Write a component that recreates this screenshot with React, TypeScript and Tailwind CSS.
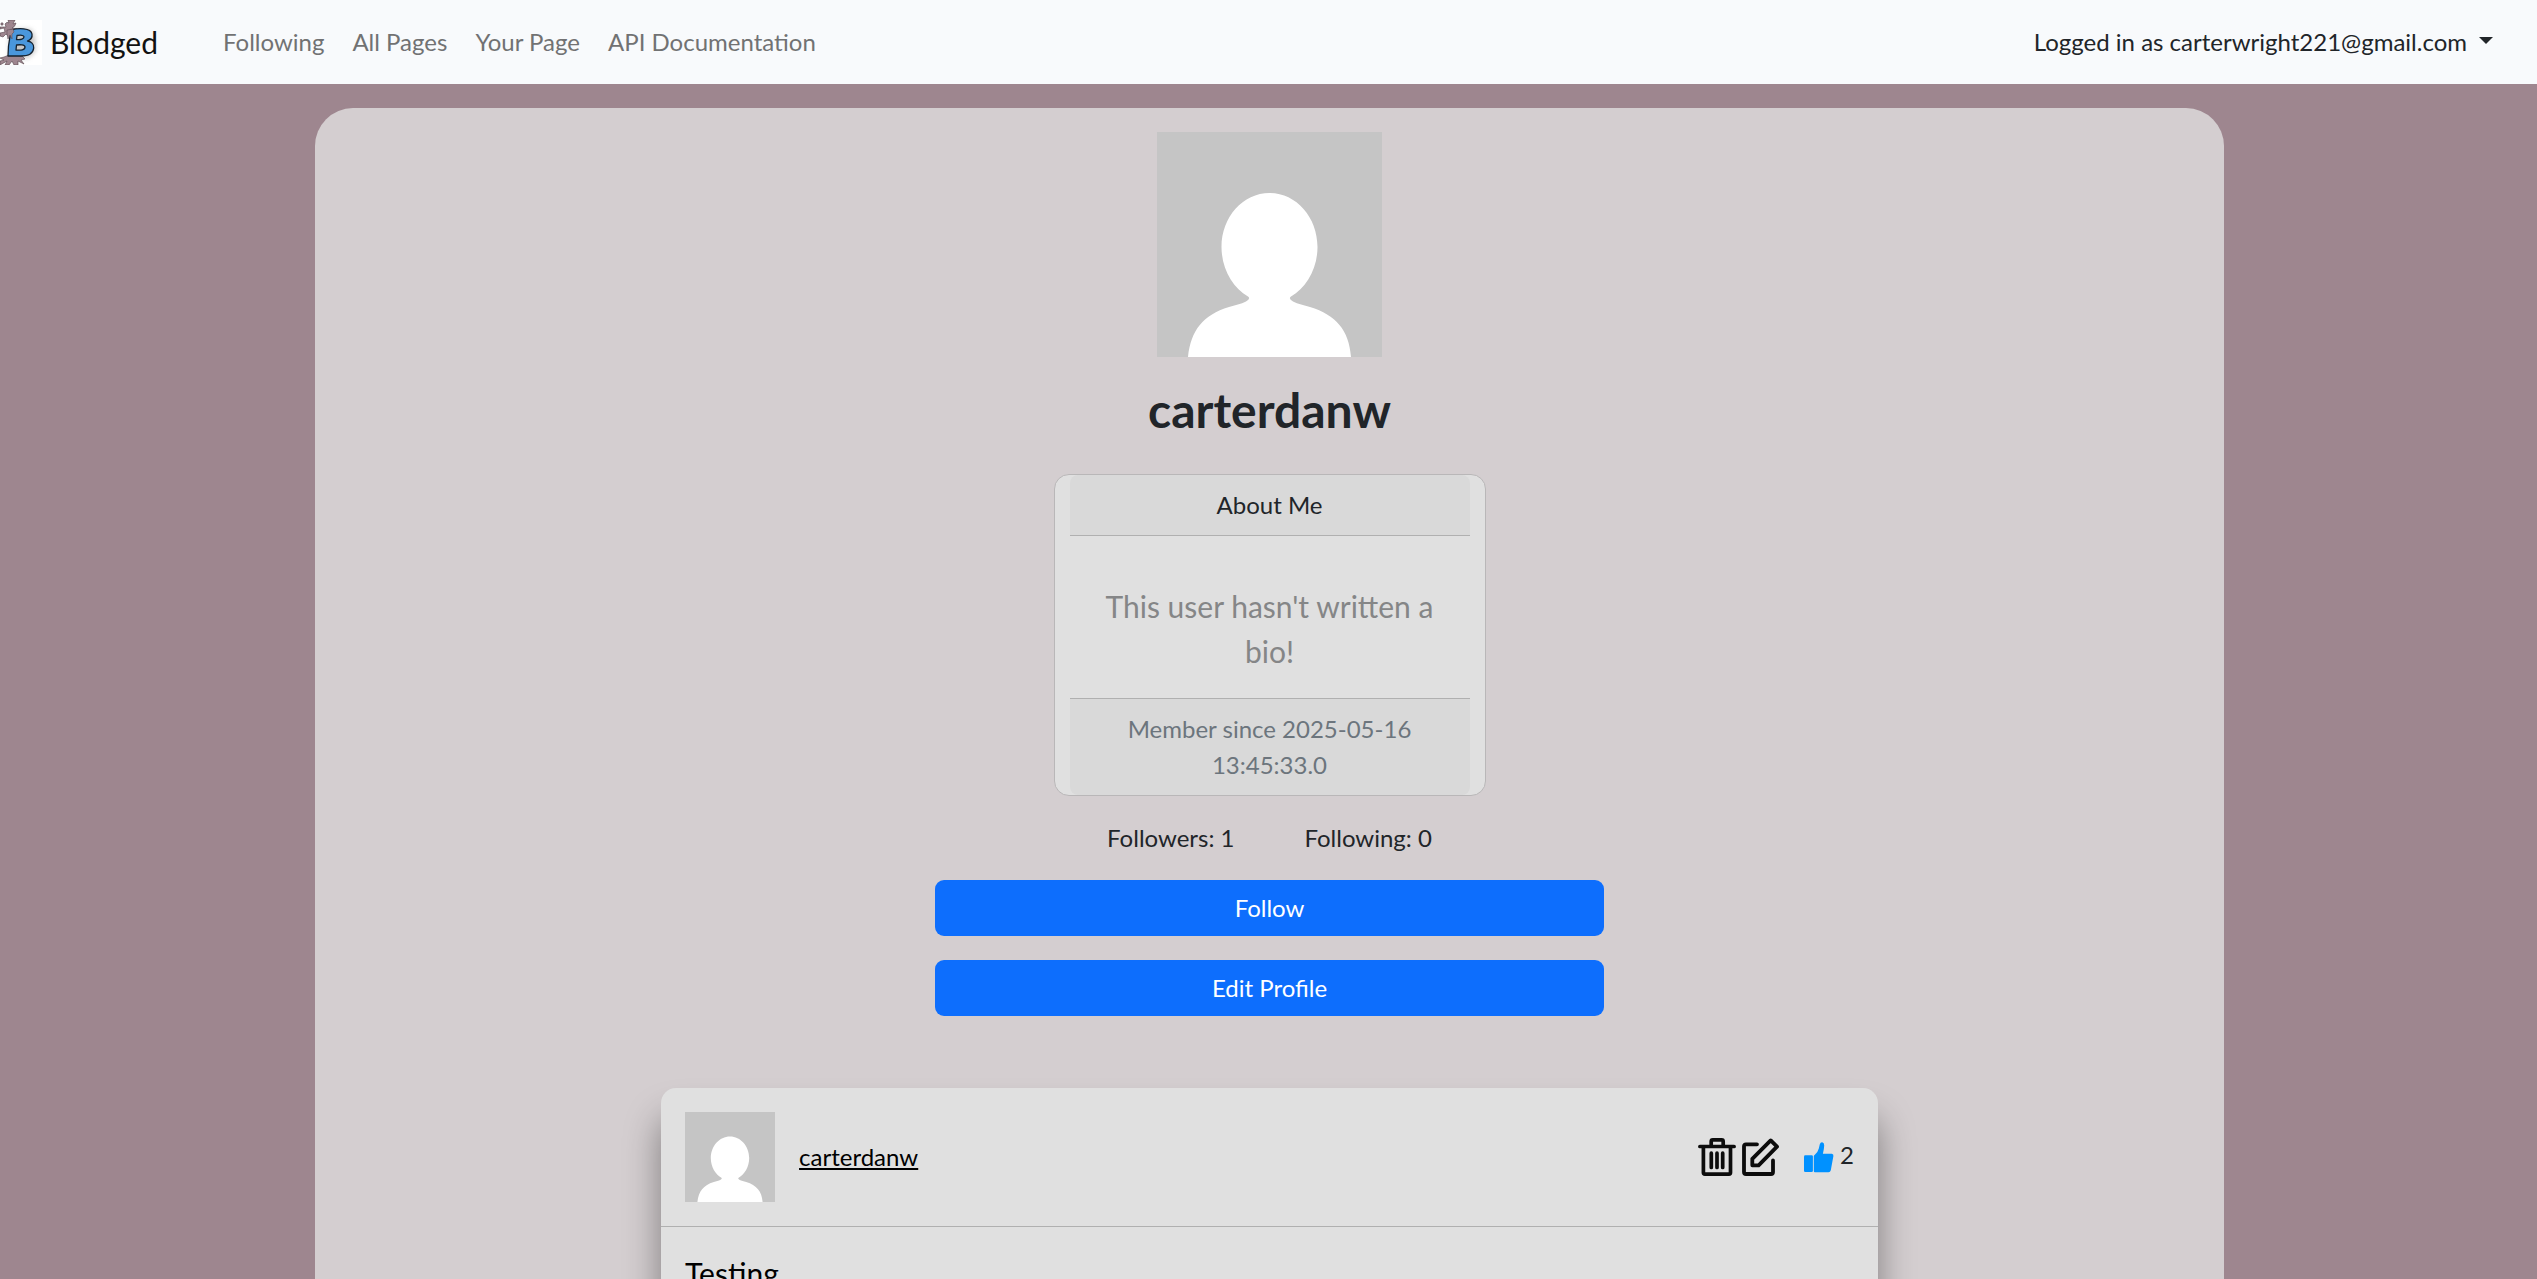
import type { ReactNode } from "react";

function Avatar({ className }: { className: string }) {
  return (
    <svg viewBox="0 0 225 225" className={className} role="img" aria-label="carterdanw's profile picture">
      <rect width="225" height="225" fill="#c5c5c5" />
      <path
        fill="#fff"
        d="M112.500 61C139 61 160.500 85 160.500 115C160.500 137 149 156 134 164.500Q131 166.500 136 169.500C141 172 147 173 153 175C179 183 192 198 194 225H31C34 198 46 183 72 175C78 173 84 172 89 169.500Q94 166.500 91 164.500C76 156 64.500 137 64.500 115C64.500 85 86 61 112.500 61Z"
      />
    </svg>
  );
}

function Logo() {
  return (
    <svg viewBox="0 0 42 45" className="h-[45px] w-[42px] shrink-0" aria-hidden="true">
      <defs>
        <filter id="logo-shadow" x="-30%" y="-30%" width="160%" height="160%">
          <feGaussianBlur stdDeviation="2.500" />
        </filter>
      </defs>
      <rect width="42" height="45" fill="#fff" />
      <path d="M10 9H30Q37 14 35 32L28 38H9Z" fill="#9a9a9a" opacity=".55" filter="url(#logo-shadow)" />
      <g fill="#9e868f" stroke="#55454c" strokeWidth=".6">
        <path d="M5 4Q7 1 9 3L8 0H15L13 4L16 3Q15 7 12 8L17 9L10 12L9 17L6 14L3 17L0 16V13L5 12L4 8L0 9V7L6 7Z" />
        <path d="M4 37L9 35L22 36L25 39L21 40L24 44L18 41V45H14L12 41L9 45H5L7 41L0 45V41L4 40L0 38Z" />
        <circle cx="2" cy="4" r="1.200" />
      </g>
      <path
        fillRule="evenodd"
        fill="#4a97dc"
        stroke="#16222e"
        strokeWidth="1.300"
        strokeLinejoin="round"
        d="M11 10C18 8 31 7.500 32 14C32.600 18 30 20 27.500 21C31 21.500 34 24 33.700 28C33 35 27 36 21 36H8L8.500 26Z M17 15.500L16.500 19.500C21 20 24 19 24 16.800C24 15 20.500 15 17 15.500Z M16.500 25L16 30C21 30.500 25 30 25 27C25 24.500 20 24.500 16.500 25Z"
      />
      <path d="M7 10L13 9L14 12L12 14V19L10 15L8 19L7 14Z" fill="#9e868f" stroke="#55454c" strokeWidth=".5" />
    </svg>
  );
}

function TrashIcon() {
  return (
    <svg viewBox="0 0 38 38" className="size-[38px]" fill="none" stroke="#0c0c0c" strokeWidth="3.700" strokeLinejoin="round" strokeLinecap="round" aria-hidden="true">
      <path d="M1.900 8.500H36.100M13.200 8V3.500Q13.200 1.900 14.800 1.900H23.600Q25.200 1.900 25.200 3.500V8M5.400 9V34.600Q5.400 36.100 6.900 36.100H31Q32.500 36.100 32.500 34.600V9" />
      <path d="M13.300 15.200V29.500M19 15.200V29.500M24.700 15.200V29.500" />
    </svg>
  );
}

function EditIcon() {
  return (
    <svg viewBox="0 0 38 38" className="size-[38px]" fill="none" stroke="#0c0c0c" strokeWidth="3.800" strokeLinejoin="round" strokeLinecap="round" aria-hidden="true">
      <path d="M15 6.300H4Q2 6.300 2 8.300V34Q2 36 4 36H29Q31 36 31 34V22.500" />
      <path d="M10.300 27.300V20.800L28.700 2.400L35 8.700L16.600 27.300Z" />
    </svg>
  );
}

function LikeIcon() {
  return (
    <svg viewBox="0 0 30 31" className="h-[31px] w-[30px]" fill="#0091ff" aria-hidden="true">
      <rect x="0" y="13.300" width="8.900" height="16.700" rx="1.300" />
      <path d="M9.800 14.500Q9.800 13.600 10.600 13.100Q13.500 11.200 14.800 6.500L15.800 2.300Q16.500 0 18.200 .2Q20.300 .6 20.200 3.500Q20.100 7 18.900 11.800H27.800Q29.700 12 29.400 14L26.800 28.300Q26.300 30.300 24.500 30.300H11Q9.800 30.300 9.800 29Z" />
    </svg>
  );
}

function NavLink({ children }: { children: ReactNode }) {
  return (
    <li>
      <a href="#" className="text-[#717273]">{children}</a>
    </li>
  );
}

const pages = ["Following", "All Pages", "Your Page", "API Documentation"];

export default function App() {
  return (
    <div className="flex min-h-screen flex-col bg-[#9e868f] font-['Lato',sans-serif] text-2xl leading-9 text-[#212529]">
      <nav className="flex h-[84px] shrink-0 items-center bg-[#f8fafc] pr-11">
        <a href="#" className="flex w-[199px] items-center gap-2 text-[30px] leading-[45px] text-[#121212]">
          <Logo />
          Blodged
        </a>
        <ul className="ml-6 flex gap-7 whitespace-nowrap">
          {pages.map((page) => (
            <NavLink key={page}>{page}</NavLink>
          ))}
        </ul>
        <button type="button" className="ml-auto flex items-center gap-3 whitespace-nowrap">
          Logged in as carterwright221@gmail.com
          <svg viewBox="0 0 14 7" className="mb-1 h-[7px] w-3.5" aria-hidden="true">
            <path d="M0 0H14L7 7Z" fill="#212529" />
          </svg>
        </button>
      </nav>

      <div className="flex grow flex-col pl-0.5">
        <main className="mx-auto mt-6 flex w-[75.3%] grow flex-col items-center rounded-t-[38px] bg-[#d4ced0] pt-6">
          <Avatar className="size-[225px]" />
          <h1 className="mt-6 text-5xl leading-[57px] font-bold">carterdanw</h1>

          <section className="mt-9 w-[432px] rounded-[15px] border border-[#b9b7b8] bg-[#e0e0e0] px-[15px] text-center">
            <h2 className="rounded-t-lg border-b border-[#b0b0b0] bg-[#d9d9d9] px-6 py-3">About Me</h2>
            <p className="px-6 pt-12 pb-6 text-[30px] leading-[45px] text-[#858687]">This user hasn't written a bio!</p>
            <p className="rounded-b-lg border-t border-[#b0b0b0] bg-[#d9d9d9] px-6 py-3 text-[#6c757d]">
              Member since 2025-05-16 13:45:33.0
            </p>
          </section>

          <div className="mt-6 flex gap-[70px]">
            <a href="#">Followers: 1</a>
            <a href="#">Following: 0</a>
          </div>

          <div className="mt-6 flex w-[35%] flex-col gap-6 text-white">
            <button type="button" className="rounded-[9px] bg-[#0d6efd] py-2.5">Follow</button>
            <button type="button" className="rounded-[9px] bg-[#0d6efd] py-2.5">Edit Profile</button>
          </div>

          <article className="mt-[72px] w-[63.75%] grow rounded-t-[15px] bg-[#e0e0e0] text-black shadow-[0_30px_36px_rgba(0,0,0,0.4)]">
            <header className="flex items-center border-b border-[#b0b0b0] p-6">
              <Avatar className="size-[90px]" />
              <a href="#" className="ml-6 underline decoration-2 underline-offset-2">carterdanw</a>
              <div className="ml-auto flex items-center text-[#212529]">
                <button type="button" aria-label="Delete post"><TrashIcon /></button>
                <button type="button" aria-label="Edit post" className="ml-1.5"><EditIcon /></button>
                <button type="button" aria-label="Like post" className="ml-6 flex items-center gap-1.5">
                  <LikeIcon />
                  <span className="pb-1">2</span>
                </button>
              </div>
            </header>
            <p className="px-6 pt-6 text-[30px] leading-[45px]">Testing</p>
          </article>
        </main>
      </div>
    </div>
  );
}
